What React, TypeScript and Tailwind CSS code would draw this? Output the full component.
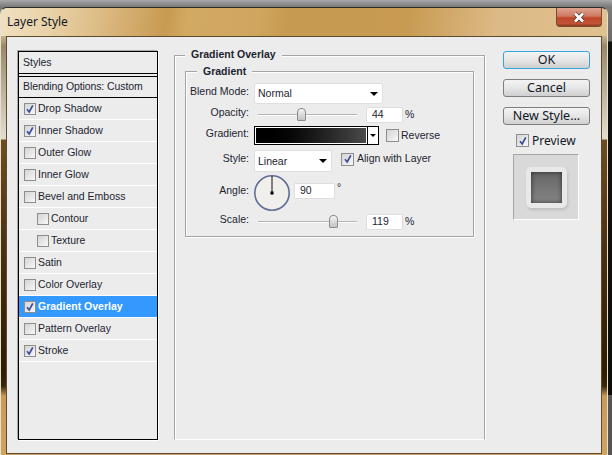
const styleRows = [
  { label: "Drop Shadow", checked: true },
  { label: "Inner Shadow", checked: true },
  { label: "Outer Glow" },
  { label: "Inner Glow" },
  { label: "Bevel and Emboss" },
  { label: "Contour", indent: true },
  { label: "Texture", indent: true },
  { label: "Satin" },
  { label: "Color Overlay" },
  { label: "Gradient Overlay", checked: true, active: true },
  { label: "Pattern Overlay" },
  { label: "Stroke", checked: true },
]

function Check({ checked, big }: { checked?: boolean; big?: boolean }) {
  return (
    <span
      className={`flex shrink-0 items-center justify-center border border-[#8e8e8e] bg-gradient-to-br from-[#d4d4d4] to-[#f8f8f8] ${big ? "h-[13px] w-[13px]" : "h-[12px] w-[12px]"}`}
    >
      {checked && (
        <svg width="10" height="10" viewBox="0 0 10 10" fill="none">
          <path d="M2 5.2 L4.2 8 L7.8 1.4" stroke="#3b4c9e" strokeWidth="1.7" />
        </svg>
      )}
    </span>
  )
}

function Arrow() {
  return <span className="h-0 w-0 border-x-[4px] border-t-[4px] border-x-transparent border-t-black" />
}

function Label({ children }: { children: string }) {
  return <span className="w-[60px] shrink-0 whitespace-nowrap pb-[4px] text-right text-[#1c2430]">{children}</span>
}

function Select({ value, width }: { value: string; width: string }) {
  return (
    <div className={`flex items-center justify-between rounded-[2px] border border-[#dfdfdf] bg-white pl-[3px] pr-[4px] ${width}`}>
      <span className="pt-[1px]">{value}</span>
      <Arrow />
    </div>
  )
}

function Slider({ thumb }: { thumb: string }) {
  return (
    <div className="relative h-[2px] w-[99px] border-t border-[#b4b4b4] bg-white">
      <span
        className={`absolute -top-[7px] h-[13px] w-[9px] rounded-t-[4px] rounded-b-[1px] border border-[#8c8c8c] bg-gradient-to-b from-[#f4f4f4] to-[#c4c4c4] ${thumb}`}
      />
    </div>
  )
}

function NumberField({ value, width = "w-[37px]" }: { value: string; width?: string }) {
  return (
    <div className={`flex h-[16px] items-center rounded-[1px] border border-[#dedede] bg-white pl-[5px] ${width}`}>
      {value}
    </div>
  )
}

function Button({ children, primary }: { children: string; primary?: boolean }) {
  return (
    <button
      className={`flex h-[18px] w-[87px] items-center justify-center rounded-[3px] border bg-gradient-to-b from-[#f4f4f4] via-[#e6e6e6] to-[#cfcfcf] pt-[1px] font-['Noto_Sans',sans-serif] text-[12.5px] text-[#111827] ${primary ? "border-[#35a4e0] from-[#eaf4f8] to-[#cddbe2]" : "border-[#7e7e7e]"}`}
    >
      {children}
    </button>
  )
}

function StyleList() {
  return (
    <div className="flex h-[389px] w-[140px] shrink-0 flex-col border border-black bg-[#ececec] shadow-[-1px_-1px_0_#a8a8a8,1px_1px_0_#fff]">
      <div className="flex h-[22px] shrink-0 items-center border-b border-black pl-[4px]">Styles</div>
      <div className="mt-[2px] flex h-[22px] shrink-0 items-center whitespace-nowrap border-y border-black pl-[4px] tracking-[-0.1px]">
        Blending Options: Custom
      </div>
      {styleRows.map((row) => (
        <div
          key={row.label}
          className={`flex h-[22px] shrink-0 items-center gap-[2px] border-b border-white ${row.indent ? "pl-[18px]" : "pl-[5px]"} ${row.active ? "bg-[#3399ff] font-bold text-white" : ""}`}
        >
          <Check checked={row.checked} />
          <span>{row.label}</span>
        </div>
      ))}
    </div>
  )
}

function GradientGroup() {
  return (
    <div className="relative ml-[10px] mt-[15px] h-[166px] w-[289px] border border-[#a4a4a4] pl-[3px] pt-[11px] shadow-[inset_1px_1px_0_#fff,1px_1px_0_#fff]">
      <span className="absolute -top-[8px] left-[11px] bg-[#ececec] px-[6px] font-bold text-[#1c2430]">Gradient</span>

      <div className="flex h-[21px] items-center gap-[5px]">
        <Label>Blend Mode:</Label>
        <Select value="Normal" width="h-[21px] w-[129px]" />
      </div>

      <div className="mt-[3px] flex h-[16px] items-center">
        <Label>Opacity:</Label>
        <div className="ml-[9px]">
          <Slider thumb="left-[39px]" />
        </div>
        <div className="ml-[9px]">
          <NumberField value="44" />
        </div>
        <span className="ml-[2px]">%</span>
      </div>

      <div className="mt-[3px] flex h-[19px] items-center">
        <Label>Gradient:</Label>
        <div className="ml-[5px] flex h-[19px] w-[125px] border border-black">
          <div className="flex-1 border border-white bg-gradient-to-r from-black to-[#4a4a4a]" />
          <div className="flex w-[11px] items-center justify-center border-l border-black bg-white">
            <span className="h-0 w-0 border-x-[3px] border-t-[3px] border-x-transparent border-t-black" />
          </div>
        </div>
        <span className="ml-[7px]">
          <Check big />
        </span>
        <span className="ml-[2px]">Reverse</span>
      </div>

      <div className="mt-[5px] flex h-[22px] items-center">
        <Label>Style:</Label>
        <div className="ml-[5px]">
          <Select value="Linear" width="h-[22px] w-[78px]" />
        </div>
        <div className="ml-[9px] flex items-center gap-[3px] pb-[4px]">
          <Check checked big />
          <span>Align with Layer</span>
        </div>
      </div>

      <div className="mt-[1px] flex h-[39px] items-center">
        <Label>Angle:</Label>
        <svg className="ml-[4px] shrink-0" width="38" height="38" viewBox="0 0 38 38">
          <circle cx="19" cy="19" r="17.2" fill="#f1efeb" stroke="#5c6d96" strokeWidth="1.6" />
          <path d="M19 2 V19" stroke="#111" strokeWidth="1" />
          <rect x="17.5" y="17.5" width="3" height="3" fill="#000" />
        </svg>
        <div className="ml-[3px] -mt-[4px]">
          <NumberField value="90" width="w-[41px]" />
        </div>
        <span className="ml-[2px] -mt-[9px]">°</span>
      </div>

      <div className="mt-[2px] flex h-[16px] items-center">
        <Label>Scale:</Label>
        <div className="ml-[9px]">
          <Slider thumb="left-[71px]" />
        </div>
        <div className="ml-[9px]">
          <NumberField value="119" />
        </div>
        <span className="ml-[2px]">%</span>
      </div>
    </div>
  )
}

function Sidebar() {
  return (
    <div className="ml-[18px] flex w-[88px] shrink-0 flex-col">
      <div className="flex flex-col gap-[10px]">
        <Button primary>OK</Button>
        <Button>Cancel</Button>
        <Button>New Style...</Button>
      </div>
      <div className="ml-[13px] mt-[9px] flex h-[13px] items-center gap-[3px] font-['Noto_Sans',sans-serif] text-[12px] text-[#111827]">
        <Check checked big />
        <span>Preview</span>
      </div>
      <div className="ml-[10px] mt-[7px] flex h-[66px] w-[66px] items-center justify-center border border-[#a6a6a6] border-b-white border-r-white bg-[#d9d9d9]">
        <div className="flex h-[41px] w-[41px] items-center justify-center rounded-[5px] bg-[#e8e8e8] shadow-[1px_2px_3px_rgba(0,0,0,0.12)]">
          <div className="h-[31px] w-[31px] bg-gradient-to-b from-[#666] to-[#858585] shadow-[inset_0_0_5px_rgba(0,0,0,0.6)]" />
        </div>
      </div>
    </div>
  )
}

export default function App() {
  return (
    <div className="flex h-[455px] w-[612px] flex-col overflow-hidden bg-[linear-gradient(to_bottom,#a8a8a8_0px,#7a7a7a_7px,#6a6a6a_41px,#111_42px,#0c0c0c_395px,#555_395px)] pt-[7px] font-['Liberation_Sans',sans-serif] text-[10.5px] text-[#1c2430]">
      <div className="flex h-[448px] w-[608px] flex-col rounded-t-[7px] border-x border-t border-x-[#e6dfd2] border-t-[#2e2a24] bg-[linear-gradient(to_bottom,#c8b48a_28px,#9a8a6a_38px,#e4ddd0_131px,#6e4e20_132px,#4a3010_243px,#2e1c00_363px,#3a2608_378px,#c89a55_388px,#cfa560_448px)]">
        <div className="flex h-[28px] shrink-0 justify-between rounded-t-[6px] bg-[linear-gradient(100deg,#f0dfc0_0px,#e9d2a8_50px,#dfc08c_90px,#c89a52_165px,#d2a962_185px,#d0a560_255px,#c69a50_285px,#c89a52_400px,#dcb985_490px,#e0c290_608px)] pl-[6px] pr-[5px]">
          <span className="pt-[5px] font-['Noto_Sans',sans-serif] text-[12px] text-[#111827]">Layer Style</span>
          <div className="flex h-[19px] w-[46px] items-center justify-center rounded-b-[4px] border border-t-0 border-[#7a4a30] bg-[linear-gradient(to_bottom,#dda392_0%,#cf7a62_45%,#bf4526_55%,#c2553a_85%,#8c3a20_100%)]">
            <svg width="14" height="11" viewBox="0 0 14 11">
              <path d="M3 1.5 L11 9.5 M11 1.5 L3 9.5" stroke="#5a3a30" strokeWidth="4.2" />
              <path d="M3 1.5 L11 9.5 M11 1.5 L3 9.5" stroke="#fff" strokeWidth="2.6" />
            </svg>
          </div>
        </div>
        <div className="flex flex-1 px-[5px] pb-[1px]">
          <div className="flex flex-1 border border-[#5f4c30] bg-[#ececec] pl-[11px] pt-[14px]">
            <StyleList />
            <div className="relative ml-[16px] mt-[4px] h-[385px] w-[311px] shrink-0 border border-[#a4a4a4] border-b-white shadow-[inset_1px_1px_0_#fff,1px_0_0_#fff]">
              <span className="absolute -top-[9px] left-[10px] bg-[#ececec] px-[6px] font-bold text-[#1c2430]">
                Gradient Overlay
              </span>
              <GradientGroup />
            </div>
            <Sidebar />
          </div>
        </div>
      </div>
    </div>
  )
}
